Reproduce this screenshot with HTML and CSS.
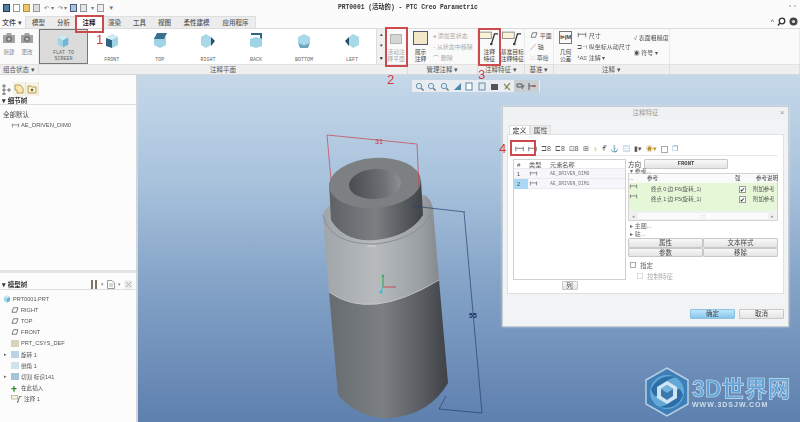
FILE: index.html
```html
<!DOCTYPE html>
<html lang="zh-CN">
<head>
    <meta charset="UTF-8">
    <title>PRT0001 - PTC Creo Parametric</title>
    <link rel="stylesheet" href="styles.css">
</head>
<body>
    <svg class="defs" width="0" height="0">
        <symbol id="dim" viewBox="0 0 12 8"><path d="M1 1V7M11 1V7M1 3H11" fill="none" stroke="#555" stroke-width="1"/></symbol>
        <symbol id="cube" viewBox="0 0 16 16"><path d="M8 1L14 4V12L8 15L2 12V4Z" fill="#9fd3e6"/><path d="M8 1L14 4L8 7L2 4Z" fill="#cfeaf3"/><path d="M8 7L14 4V12L8 15Z" fill="#6fb4d2"/></symbol>
        <symbol id="cube-top" viewBox="0 0 16 16"><path d="M8 6L14 4V12L8 15L2 12V4Z" fill="#9fd3e6"/><path d="M5 0H15L12 6H2Z" fill="#3b6f8e"/></symbol>
        <symbol id="cube-front" viewBox="0 0 16 16"><path d="M8 1L14 4V12L8 15Z" fill="#9fd3e6"/><path d="M2 5L8 7V15L2 13Z" fill="#2f6683"/><path d="M8 1L14 4L8 7L2 4Z" fill="#cfeaf3"/></symbol>
        <symbol id="cube-right" viewBox="0 0 16 16"><path d="M6 1L11 4V12L6 15L1 12V4Z" fill="#a9d8e9"/><path d="M11 4L15 8L11 13Z" fill="#24506b"/></symbol>
        <symbol id="cube-back" viewBox="0 0 16 16"><path d="M8 4L14 6V13L8 15L2 13V6Z" fill="#9fd3e6"/><path d="M3 0H14V6L12 5V2H3Z" fill="#2f6683"/></symbol>
        <symbol id="cube-bottom" viewBox="0 0 16 16"><path d="M8 1L14 4V10L8 12L2 10V4Z" fill="#a9d8e9"/><path d="M2 10L8 12L14 10L12 15H4Z" fill="#6fa6bf"/></symbol>
        <symbol id="cube-left" viewBox="0 0 16 16"><path d="M9 1L15 4V12L9 15L5 12V4Z" fill="#a9d8e9"/><path d="M5 4L1 8L5 13Z" fill="#24506b"/></symbol>
        <symbol id="note" viewBox="0 0 22 16"><rect x="0.5" y="1" width="13" height="7" fill="#fbf3d6" stroke="#888"/><path d="M21 3H17L14 13" fill="none" stroke="#333" stroke-width="1.4"/><circle cx="13.5" cy="14" r="1.4" fill="#333"/></symbol>
        <symbol id="plane" viewBox="0 0 10 8"><path d="M3 1H9L7 7H1Z" fill="none" stroke="#555"/></symbol>
        <symbol id="camera" viewBox="0 0 14 12"><path d="M1 3H4L5 1H9L10 3H13V11H1Z" fill="#a3a3a3"/><circle cx="7" cy="7" r="3" fill="#6f6f6f"/><circle cx="7" cy="7" r="1.5" fill="#c8c8c8"/></symbol>
        <symbol id="lens" viewBox="0 0 10 10"><circle cx="4.5" cy="4.5" r="3" fill="#dcebf5" stroke="#5c8ba8"/><path d="M7 7L9.5 9.5" stroke="#5c6f7c" stroke-width="1.4"/></symbol>
    </svg>

    <div class="page">
        <!-- Title bar -->
        <div class="titlebar">
            <div class="quick">
                <span class="qa qa-app"></span>
                <span class="qa qa-new"></span>
                <span class="qa qa-open"></span>
                <span class="qa qa-save"></span>
                <span class="qa-text">↶ ▾</span>
                <span class="qa-text">↷ ▾</span>
                <span class="qa qa-regen"></span>
                <span class="qa qa-win"></span>
                <span class="qa-text">▾</span>
                <span class="qa qa-close"></span>
                <span class="qa-text">▼</span>
            </div>
            <div class="title">PRT0001 (活动的) - PTC Creo Parametric</div>
            <div class="winbtn">▫ ▫</div>
        </div>

        <!-- Tabs -->
        <div class="tabs">
            <span class="tab-file">文件 ▾</span>
            <div class="tab-strip">
                <span class="tab">模型</span>
                <span class="tab">分析</span>
                <span class="tab active">注释</span>
                <span class="tab">渲染</span>
                <span class="tab">工具</span>
                <span class="tab">视图</span>
                <span class="tab">柔性建模</span>
                <span class="tab">应用程序</span>
            </div>
            <div class="tab-help">
                <span>^</span>
                <svg width="9" height="9" viewBox="0 0 9 9"><circle cx="5" cy="4" r="2.8" fill="none" stroke="#333" stroke-width="1.3"/><path d="M3 6L1 8.5" stroke="#333" stroke-width="1.3"/></svg>
                <svg width="9" height="9" viewBox="0 0 9 9"><circle cx="4.5" cy="4.5" r="4" fill="#444"/><circle cx="4.5" cy="4.5" r="1.6" fill="#ddd"/></svg>
            </div>
        </div>

        <!-- Ribbon -->
        <div class="ribbon">
            <div class="group g-state">
                <div class="group-body">
                    <div class="cam"><svg width="14" height="12"><use href="#camera"/></svg><span>新建</span></div>
                    <div class="cam"><svg width="14" height="12"><use href="#camera"/></svg><span>更改</span></div>
                </div>
                <div class="group-label">组合状态 ▾</div>
            </div>
            <div class="group g-plane">
                <div class="group-body">
                    <div class="view selected"><svg width="14" height="14"><use href="#cube"/></svg><span>FLAT TO<br>SCREEN</span></div>
                    <div class="view"><svg width="16" height="16"><use href="#cube-front"/></svg><span>FRONT</span></div>
                    <div class="view"><svg width="16" height="16"><use href="#cube-top"/></svg><span>TOP</span></div>
                    <div class="view"><svg width="16" height="16"><use href="#cube-right"/></svg><span>RIGHT</span></div>
                    <div class="view"><svg width="16" height="16"><use href="#cube-back"/></svg><span>BACK</span></div>
                    <div class="view"><svg width="16" height="16"><use href="#cube-bottom"/></svg><span>BOTTOM</span></div>
                    <div class="view"><svg width="16" height="16"><use href="#cube-left"/></svg><span>LEFT</span></div>
                    <div class="gallery-scroll"><span>▴</span><span>▾</span><span class="more">▼</span></div>
                    <div class="tool tool-plane"><span class="plane-icon"></span><span>活动注<br>释平面</span></div>
                </div>
                <div class="group-label">注释平面</div>
            </div>
            <div class="group g-manage">
                <div class="group-body">
                    <div class="tool"><span class="show-icon"></span><span>展示<br>注释</span></div>
                    <div class="minor faded">
                        <span>⁕ 添加至状态</span>
                        <span>⁃ 从状态中移除</span>
                        <span>⌒ 删除</span>
                    </div>
                </div>
                <div class="group-label">管理注释 ▾</div>
            </div>
            <div class="group g-feature">
                <div class="group-body">
                    <div class="tool tool-note"><svg width="20" height="15"><use href="#note"/></svg><span>注释<br>特征</span></div>
                    <div class="tool tool-datum"><svg width="20" height="15"><use href="#note"/></svg><span>基准目标<br>注释特征</span></div>
                </div>
                <div class="group-label">注释特征 ▾</div>
            </div>
            <div class="group g-datum">
                <div class="group-body">
                    <div class="minor">
                        <span><svg width="8" height="6"><use href="#plane"/></svg> 平面</span>
                        <span>╱ 轴</span>
                        <span>⁙ 草绘</span>
                    </div>
                </div>
                <div class="group-label">基准 ▾</div>
            </div>
            <div class="group g-note">
                <div class="group-body">
                    <div class="tool tool-gdt"><span class="gdt-icon">⊳|M</span><span>几何<br>公差</span></div>
                    <div class="minor">
                        <span><svg width="10" height="6"><use href="#dim"/></svg> 尺寸</span>
                        <span>⊐⊣ 纵坐标从动尺寸</span>
                        <span>⁴A≡ 注解 ▾</span>
                    </div>
                    <div class="minor minor-short">
                        <span>√ 表面粗糙度</span>
                        <span>◉ 符号 ▾</span>
                    </div>
                </div>
                <div class="group-label">注释 ▾</div>
            </div>
            <div class="group g-rest"><div class="group-body"></div><div class="group-label"></div></div>
        </div>

        <div class="work">
            <!-- Left panel -->
            <div class="side">
                <div class="side-tabs">
                    <span class="side-tab plain">
                        <svg width="9" height="11" viewBox="0 0 9 11"><path d="M1 1H3V3H1ZM1 5H3V7H1ZM1 9H3V11H1ZM6 5H8V7H6Z" fill="none" stroke="#555" stroke-width=".8"/></svg>
                    </span>
                    <span class="side-tab"><svg width="10" height="10" viewBox="0 0 10 10"><path d="M1 1H6L9 4V9H3V6H1Z" fill="#fbe6ae" stroke="#a98a3c" stroke-width=".8"/></svg></span>
                    <span class="side-tab"><svg width="10" height="10" viewBox="0 0 10 10"><path d="M1 2H4L5 3H9V9H1Z" fill="#fbeec5" stroke="#a98a3c" stroke-width=".8"/><circle cx="5" cy="6" r="1.2" fill="#555"/></svg></span>
                </div>
                <div class="panel detail">
                    <div class="panel-head">▾ 细节树</div>
                    <div class="detail-body">
                        <div class="tree-root">全部默认</div>
                        <div class="tree-dim"><svg width="9" height="5"><use href="#dim"/></svg>AE_DRIVEN_DIM0</div>
                    </div>
                </div>
                <div class="panel model">
                    <div class="panel-head model-head">
                        <span>▾ 模型树</span>
                        <span class="head-tools">
                            <svg width="8" height="9" viewBox="0 0 8 9"><path d="M1 0H3V9H1ZM5 0H7V9H5Z" fill="#7d7563"/></svg>
                            <i>▾</i>
                            <svg width="8" height="9" viewBox="0 0 8 9"><path d="M.5.5H5L7.5 3V8.5H.5Z" fill="#fff" stroke="#999"/><path d="M2 4H6M2 6H6" stroke="#aaa"/></svg>
                            <i>▾</i>
                            <svg width="9" height="9" viewBox="0 0 9 9"><rect x=".5" y=".5" width="8" height="8" fill="#e9e9e9"/><path d="M2 2L7 7M7 2L2 7" stroke="#b5b5b5"/></svg>
                        </span>
                    </div>
                    <ul class="tree">
                        <li><svg width="8" height="8"><use href="#cube"/></svg>PRT0001.PRT</li>
                        <li class="lv1"><svg width="8" height="6"><use href="#plane"/></svg>RIGHT</li>
                        <li class="lv1"><svg width="8" height="6"><use href="#plane"/></svg>TOP</li>
                        <li class="lv1"><svg width="8" height="6"><use href="#plane"/></svg>FRONT</li>
                        <li class="lv1"><i class="dot csys"></i>PRT_CSYS_DEF</li>
                        <li class="lv1 arrow"><i class="dot rev"></i>旋转 1</li>
                        <li class="lv1"><i class="dot chamfer"></i>倒角 1</li>
                        <li class="lv1 arrow"><i class="dot cut"></i>切割 标识141</li>
                        <li class="lv1"><i class="insert">✚</i>在此插入</li>
                        <li class="lv1"><svg width="11" height="8"><use href="#note"/></svg>注释 1</li>
                    </ul>
                </div>
            </div>

            <!-- Graphics area -->
            <div class="viewport">
                <div class="view-tools">
                    <span><svg width="9" height="9"><use href="#lens"/></svg></span>
                    <span><svg width="9" height="9"><use href="#lens"/></svg></span>
                    <span><svg width="9" height="9"><use href="#lens"/></svg></span>
                    <span><svg width="9" height="9" viewBox="0 0 9 9"><path d="M1 8L8 1V8Z" fill="#4d87ad"/></svg></span>
                    <span><svg width="9" height="9" viewBox="0 0 9 9"><rect x="1" y="1" width="6" height="7" fill="#fff" stroke="#4d87ad"/></svg></span>
                    <span><svg width="9" height="9" viewBox="0 0 9 9"><rect x="1" y="1" width="6" height="7" fill="#dfe9f0" stroke="#6b8ca3"/></svg></span>
                    <span><svg width="9" height="9" viewBox="0 0 9 9"><rect x="1" y="2" width="7" height="6" fill="#555"/></svg></span>
                    <span><svg width="9" height="9" viewBox="0 0 9 9"><path d="M1 2L7 8M7 1L2 7" stroke="#8a8a55" stroke-width="1.2"/></svg></span>
                    <span class="on"><svg width="9" height="9" viewBox="0 0 9 9"><path d="M1 2H6V5H1ZM6 7L8 3" fill="none" stroke="#555"/></svg></span>
                    <span class="on"><svg width="9" height="9" viewBox="0 0 9 9"><path d="M1 1V8M1 4H8" fill="none" stroke="#555"/><circle cx="6" cy="4" r="1.2" fill="#c55"/></svg></span>
                </div>

                <svg class="model3d" width="662" height="347" viewBox="138 75 662 347">
                    <defs>
                        <linearGradient id="gLow" x1="0" x2="1" y1="0" y2="0">
                            <stop offset="0" stop-color="#676c70"/><stop offset=".45" stop-color="#7b7f83"/><stop offset=".8" stop-color="#575b5f"/><stop offset="1" stop-color="#3d4145"/>
                        </linearGradient>
                        <linearGradient id="gMid" x1="0" x2="1" y1="0" y2="0">
                            <stop offset="0" stop-color="#a0a5a9"/><stop offset=".45" stop-color="#b7bbbe"/><stop offset=".85" stop-color="#9a9fa3"/><stop offset="1" stop-color="#85898d"/>
                        </linearGradient>
                        <linearGradient id="gTop" x1="0" x2="1" y1="0" y2="0">
                            <stop offset="0" stop-color="#5e6266"/><stop offset=".5" stop-color="#7b7f82"/><stop offset=".85" stop-color="#505458"/><stop offset="1" stop-color="#3f4347"/>
                        </linearGradient>
                        <linearGradient id="gHole" x1="0" x2="1" y1="0" y2="0">
                            <stop offset="0" stop-color="#484c50"/><stop offset=".7" stop-color="#6f7377"/><stop offset="1" stop-color="#8c9094"/>
                        </linearGradient>
                    </defs>
                    <path d="M329 292L338 395Q360 420 392 418Q430 414 448 383L439 280Z" fill="url(#gLow)"/>
                    <path d="M323 217L329 292Q370 322 439 280L433 208Q430 198 425 195L330 205Q323 210 323 217Z" fill="url(#gMid)"/>
                    <path d="M329 292Q370 322 439 280" fill="none" stroke="#d0d3d6" stroke-width=".7"/>
                    <path d="M323 215Q330 245 376 244Q424 238 433 208" fill="none" stroke="#8b8f93" stroke-width="1"/>
                    <path d="M329 183L331 220Q345 243 376 240Q410 236 423 215L421 180Z" fill="url(#gTop)"/>
                    <ellipse cx="375" cy="183" rx="46" ry="25" transform="rotate(-4 375 183)" fill="#7c8083"/>
                    <ellipse cx="375" cy="184" rx="26" ry="15" transform="rotate(-4 375 184)" fill="url(#gHole)"/>
                    <path d="M367 246H376" stroke="#dfe1e3" stroke-width=".7"/>

                    <path d="M331 180L327 135L417 144L419 187" fill="none" stroke="#c9404a" stroke-width=".7"/>
                    <text class="dim-text red" x="379" y="144">31</text>
                    <path d="M412 206L465 212M464 212L482 413M439 409L482 413M439 409L446 396" fill="none" stroke="#2a3f72" stroke-width=".7"/>
                    <text class="dim-text navy" x="473" y="318">55</text>

                    <path d="M383 275V287" stroke="#3fae5a" stroke-width="1.2"/>
                    <path d="M383 287H396" stroke="#c8424a" stroke-width=".9"/>
                    <path d="M383 287L381 292" stroke="#35c0cf" stroke-width="1"/>
                    <circle cx="383" cy="276" r="1.3" fill="#3fae5a"/>
                    <circle cx="381" cy="292" r="1.6" fill="#35c0cf"/>
                </svg>

                <!-- Dialog -->
                <div class="dialog">
                    <div class="dlg-title">注释特征<span class="dlg-x">×</span></div>
                    <div class="dlg-tabs"><span class="dlg-tab active">定义</span><span class="dlg-tab">属性</span></div>
                    <div class="dlg-panel">
                        <div class="dlg-toolbar">
                            <svg width="9" height="6"><use href="#dim"/></svg>
                            <svg width="9" height="6"><use href="#dim"/></svg>
                            <span class="tb-glyph">⊐8</span>
                            <span class="tb-glyph">⊏8</span>
                            <span class="tb-glyph">⊡8</span>
                            <span class="tb-glyph">⊞</span>
                            <span class="tb-glyph gold">♁</span>
                            <span class="tb-glyph">∜</span>
                            <span class="tb-glyph green">⚓</span>
                            <span class="tb-glyph blue">▤</span>
                            <span class="tb-glyph">▮▾</span>
                            <span class="tb-glyph gold">◉▾</span>
                            <span class="tb-box"></span>
                            <span class="tb-glyph blue">❐</span>
                        </div>
                        <div class="dlg-main">
                            <div class="dlg-left">
                                <div class="list">
                                    <div class="list-row list-head"><span>#</span><span>类型</span><span>元素名称</span></div>
                                    <div class="list-row"><span>1</span><span><svg width="9" height="5"><use href="#dim"/></svg></span><span class="mono">AE_DRIVEN_DIM0</span></div>
                                    <div class="list-row"><span class="sel">2</span><span><svg width="9" height="5"><use href="#dim"/></svg></span><span class="mono">AE_DRIVEN_DIM1</span></div>
                                </div>
                                <button class="btn btn-col">列</button>
                            </div>
                            <div class="dlg-right">
                                <div class="dir-row"><span>方向</span><button class="btn dir-btn">FRONT</button></div>
                                <div class="sec sec-ref">▾ 参考...</div>
                                <div class="ref">
                                    <div class="ref-head"><span>...</span><span>参考</span><span>强</span><span>参考说明</span></div>
                                    <div class="ref-body">
                                        <div class="ref-row"><svg width="9" height="5"><use href="#dim"/></svg><span>终点 0:边:F6(旋转_1)</span><i class="chk">✔</i><span>附加参考</span></div>
                                        <div class="ref-row"><svg width="9" height="5"><use href="#dim"/></svg><span>终点 1:边:F5(旋转_1)</span><i class="chk">✔</i><span>附加参考</span></div>
                                    </div>
                                    <div class="ref-scroll"><span>◂</span><b>:::</b><span>▸</span></div>
                                </div>
                                <div class="sec">▸ 主图...</div>
                                <div class="sec">▸ 驻...</div>
                                <div class="btn-grid">
                                    <button class="btn">属性</button><button class="btn">文本样式</button>
                                    <button class="btn">参数</button><button class="btn">移除</button>
                                </div>
                                <label class="check"><i class="box"></i>指定</label>
                                <label class="check sub"><i class="box"></i>控制特征</label>
                            </div>
                        </div>
                    </div>
                    <div class="dlg-foot">
                        <button class="btn ok">确定</button>
                        <button class="btn cancel">取消</button>
                    </div>
                </div>

                <!-- Watermark -->
                <div class="logo">
                    <svg width="44" height="50" viewBox="0 0 44 50">
                        <path d="M22 1L43 13V37L22 49L1 37V13Z" fill="#3f7fb8" stroke="#b9cfe2" stroke-width="1.5"/>
                        <circle cx="22" cy="25" r="17" fill="#62a9d8"/>
                        <path d="M6 22Q14 6 32 10Q18 12 14 26Q10 34 6 22ZM38 28Q32 44 14 40Q28 38 32 24Q34 18 38 28Z" fill="#2e6ea8"/>
                        <path d="M22 14L32 20V31L22 37L12 31V20Z" fill="#cfe5f3"/>
                        <path d="M22 18L28 22V29L22 33L16 29V22Z" fill="#3a77ad"/>
                        <path d="M22 18L28 22L22 26L16 22Z" fill="#6fb2dd"/>
                    </svg>
                    <div class="logo-text">
                        <div class="logo-name">3D世界网</div>
                        <div class="logo-url">WWW.3DSJW.COM</div>
                    </div>
                </div>
            </div>
        </div>

        <!-- Red marks drawn over the screenshot -->
        <span class="mark mark-box box1"></span><span class="mark-num n1">1</span>
        <span class="mark mark-box box2"></span><span class="mark-num n2">2</span>
        <span class="mark mark-box box3"></span><span class="mark-num n3">3</span>
        <span class="mark mark-box box4"></span><span class="mark-num n4">4</span>
    </div>
</body>
</html>
```

FILE: styles.css
```css
/* General Reset */
* {
    margin: 0;
    padding: 0;
    box-sizing: border-box;
}

body {
    width: 800px;
    height: 422px;
    overflow: hidden;
    background: #fff;
    font-family: "Liberation Sans", "Noto Sans CJK SC", sans-serif;
    font-size: 7px;
    color: #444;
}

.defs {
    position: absolute;
}

/* The source is a scaled-down photo, so everything is a little soft */
.page {
    position: relative;
    width: 800px;
    height: 422px;
    display: flex;
    flex-direction: column;
    filter: blur(0.35px);
}

/* Title bar */
.titlebar {
    height: 15px;
    display: flex;
    align-items: center;
    padding: 0 3px;
    background: #fbfbfb;
    position: relative;
}

.quick {
    display: flex;
    align-items: center;
    gap: 3px;
}

.qa {
    width: 7px;
    height: 8px;
    border: 1px solid #999;
    background: #fff;
}

.qa-app {
    background: #4d7fa8;
    border-color: #333;
}

.qa-open {
    background: #f0c66a;
    border-color: #b9903b;
}

.qa-save {
    background: #ddd;
}

.qa-regen {
    background: #9fc8e4;
    border-color: #557;
}

.qa-win {
    background: #dde8ef;
}

.qa-close {
    background: #eee;
}

.qa-text {
    font-size: 6px;
    color: #777;
    margin-left: 1px;
}

.title {
    position: absolute;
    left: 338px;
    top: 2px;
    font-family: "Liberation Mono", "Noto Sans CJK SC", monospace;
    font-size: 6.3px;
    font-weight: bold;
    color: #333;
    white-space: nowrap;
}

.winbtn {
    position: absolute;
    right: 4px;
    top: 2px;
    color: #777;
}

/* Tabs */
.tabs {
    height: 14px;
    display: flex;
    align-items: flex-end;
    background: #fbfbfb;
    border-bottom: 1px solid #dcdcdc;
    position: relative;
}

.tab-file {
    width: 24px;
    height: 11px;
    padding-left: 2px;
    line-height: 11px;
    font-weight: 500;
}

.tab-strip {
    display: flex;
    height: 12px;
    margin-left: 1px;
    background: #ececec;
    border: 1px solid #dedede;
    border-bottom: 0;
}

.tab {
    width: 25px;
    text-align: center;
    line-height: 11px;
    font-size: 6.5px;
    font-weight: 500;
    color: #555;
    white-space: nowrap;
}

.tab:nth-child(n+7) {
    width: 39px;
}

.tab.active {
    width: 26px;
    background: #fff;
    color: #222;
    font-weight: 700;
}

.tab-help {
    position: absolute;
    right: 2px;
    top: 0;
    display: flex;
    align-items: center;
    gap: 3px;
    height: 12px;
}

/* Ribbon */
.ribbon {
    height: 46px;
    display: flex;
    background: #fafafa;
    border-bottom: 1px solid #d8d8d8;
}

.group {
    display: flex;
    flex-direction: column;
    flex: none;
}

.group-body {
    flex: 1;
    display: flex;
    min-height: 0;
    border-right: 1px solid #ececec;
}

.group-label {
    height: 10px;
    line-height: 10px;
    text-align: center;
    background: #efefef;
    border-top: 1px solid #e2e2e2;
    border-right: 1px solid #dcdcdc;
    color: #555;
    font-size: 6.5px;
}

.g-state { width: 39px; }
.g-plane { width: 369px; }
.g-manage { width: 70px; }
.g-feature { width: 47px; }
.g-datum { width: 29px; }
.g-note { width: 116px; }
.g-rest { flex: 1; }

.g-state .group-body {
    padding: 3px 1px 0 2px;
    gap: 4px;
}

.cam {
    width: 14px;
    display: flex;
    flex-direction: column;
    align-items: center;
    gap: 4px;
    color: #888;
    font-size: 5.6px;
    white-space: nowrap;
}

.view {
    width: 48.3px;
    display: flex;
    flex-direction: column;
    align-items: center;
    justify-content: space-between;
    padding: 4px 0 1px;
    background: #fff;
    font-family: "Liberation Mono", monospace;
    font-size: 5px;
    color: #666;
    text-align: center;
    line-height: 6px;
}

.view.selected {
    width: 49px;
    background: #dbdbdb;
    border: 1px solid #777;
}

.gallery-scroll {
    width: 9px;
    display: flex;
    flex-direction: column;
    align-items: center;
    background: #f0f0f0;
    border-left: 1px solid #ddd;
    font-size: 5px;
    line-height: 11px;
}

.gallery-scroll .more {
    margin-top: auto;
    color: #222;
}

.tool {
    display: flex;
    flex-direction: column;
    align-items: center;
    justify-content: space-between;
    padding: 2px 0 1px;
    font-size: 5.8px;
    line-height: 7px;
    text-align: center;
    color: #444;
}

.tool-plane {
    width: 22px;
    color: #aaa;
}

.plane-icon {
    width: 12px;
    height: 10px;
    margin-top: 3px;
    background: #d5d5d5;
    border: 1px solid #b5b5b5;
}

.g-manage .group-body {
    padding-left: 5px;
    gap: 5px;
}

.show-icon {
    width: 15px;
    height: 14px;
    background: #f1e8c8;
    border: 1px solid #557;
}

.minor {
    display: flex;
    flex-direction: column;
    justify-content: space-around;
    white-space: nowrap;
    font-size: 6px;
    padding: 1px 0;
    color: #555;
}

.minor.faded {
    color: #aaa;
}

.minor-short {
    justify-content: flex-start;
    gap: 6px;
    padding-top: 4px;
}

.tool-note { width: 23px; }
.tool-datum { width: 24px; }

.g-datum .group-body {
    padding-left: 5px;
}

.g-note .group-body {
    padding-left: 3px;
    gap: 3px;
}

.tool-gdt { width: 17px; }

.gdt-icon {
    font-size: 6px;
    font-weight: bold;
    border: 1px solid #777;
    padding: 2px 0;
    white-space: nowrap;
}

/* Work area */
.work {
    flex: 1;
    min-height: 0;
    display: flex;
}

.side {
    width: 138px;
    flex: none;
    display: flex;
    flex-direction: column;
    background: #fcfcfc;
    border-right: 2px solid #d2d6da;
}

.side-tabs {
    height: 21px;
    display: flex;
    align-items: flex-end;
    background: #fcfcfc;
}

.side-tab {
    width: 13px;
    height: 14px;
    display: flex;
    align-items: center;
    justify-content: center;
    background: #f5f2e8;
    border-right: 1px solid #e8e4d8;
}

.side-tab.plain {
    background: transparent;
    border: 0;
}

.panel-head {
    height: 9px;
    line-height: 9px;
    padding-left: 2px;
    font-size: 6.5px;
    font-weight: 700;
    color: #333;
    border-bottom: 1px solid #dedede;
}

.detail {
    height: 174px;
    flex: none;
}

.detail-body {
    padding: 4px 3px;
}

.tree-root {
    line-height: 11px;
    font-size: 6.5px;
}

.tree-dim {
    display: flex;
    align-items: center;
    gap: 1px;
    padding-left: 8px;
    font-size: 5.8px;
    line-height: 10px;
    color: #555;
}

.model {
    flex: 1;
    border-top: 3px solid #e3e3e3;
    padding-top: 7px;
}

.model-head {
    display: flex;
    justify-content: space-between;
    height: 10px;
    padding-right: 3px;
}

.head-tools {
    display: flex;
    align-items: center;
    gap: 3px;
    font-weight: 400;
    color: #888;
    font-size: 5px;
}

.head-tools i {
    font-style: normal;
}

.tree {
    list-style: none;
    padding: 3px 0 0 3px;
}

.tree li {
    height: 11.2px;
    display: flex;
    align-items: center;
    gap: 2px;
    font-size: 5.6px;
    color: #555;
}

.tree .lv1 {
    padding-left: 8px;
}

.tree .arrow {
    position: relative;
}

.tree .arrow::before {
    content: "▸";
    position: absolute;
    left: 1px;
    top: 2px;
    font-size: 5px;
    color: #666;
}

.dot {
    width: 8px;
    height: 7px;
    display: inline-block;
    flex: none;
}

.csys { background: #d9d2bb; }
.rev { background: #b8d4e6; }
.chamfer { background: #cfe2ee; }
.cut { background: #a6c4d8; }

.insert {
    width: 8px;
    font-style: normal;
    color: #2c8a2c;
    font-size: 6px;
}

/* Graphics area */
.viewport {
    flex: 1;
    position: relative;
    background: linear-gradient(to bottom, #c5d8e9 0%, #a9c3dd 30%, #84a3c7 60%, #5e80ae 100%);
}

.view-tools {
    position: absolute;
    left: 274px;
    top: 5px;
    display: flex;
    padding: 0 1px;
    background: #e9edf1;
}

.view-tools span {
    width: 12.6px;
    height: 12px;
    display: flex;
    align-items: center;
    justify-content: center;
}

.view-tools .on {
    background: #c9ced3;
}

.model3d {
    position: absolute;
    left: 0;
    top: 0;
}

.dim-text {
    font-family: "Liberation Sans", sans-serif;
    font-size: 7px;
    text-anchor: middle;
}

.dim-text.red { fill: #c9303c; }
.dim-text.navy { fill: #182a5c; font-weight: bold; }

/* Dialog */
.dialog {
    position: absolute;
    left: 364px;
    top: 31px;
    width: 287px;
    height: 221px;
    display: flex;
    flex-direction: column;
    background: #f2f3f4;
    border: 1px solid #c6ccd2;
    box-shadow: 0 0 2px rgba(255, 255, 255, 0.6);
}

.dlg-title {
    position: relative;
    height: 12px;
    line-height: 12px;
    text-align: center;
    background: #eff1f3;
    color: #999;
    font-size: 6.5px;
}

.dlg-x {
    position: absolute;
    right: 4px;
    top: 0;
    color: #888;
}

.dlg-tabs {
    display: flex;
    height: 9px;
    margin: 6px 0 0 6px;
}

.dlg-tab {
    padding: 0 2.5px;
    line-height: 9px;
    background: #ececec;
    border: 1px solid #dfdfdf;
    border-bottom: 0;
    color: #555;
}

.dlg-tab.active {
    background: #fff;
    font-weight: 500;
}

.dlg-panel {
    height: 160px;
    margin: 0 4px;
    padding: 8px 5px 0;
    background: #fff;
    border: 1px solid #dfe2e5;
}

.dlg-toolbar {
    height: 13px;
    display: flex;
    align-items: center;
    gap: 4px;
    padding-left: 2px;
    margin-bottom: 3px;
    border-bottom: 1px solid #e8e8e8;
}

.tb-glyph {
    font-size: 7px;
    line-height: 8px;
    color: #555;
}

.tb-glyph.gold { color: #b8952f; }
.tb-glyph.green { color: #7aa84e; }
.tb-glyph.blue { color: #5a97c4; }

.tb-box {
    width: 7px;
    height: 7px;
    border: 1px solid #aaa;
}

.dlg-main {
    display: flex;
    gap: 2px;
}

.dlg-left {
    width: 113px;
    display: flex;
    flex-direction: column;
    align-items: center;
}

.list {
    width: 100%;
    height: 121px;
    border: 1px solid #d0d0d0;
}

.list-row {
    display: grid;
    grid-template-columns: 15px 21px 1fr;
    height: 10px;
    line-height: 10px;
    font-size: 5.5px;
    background: #f7f6fb;
    border-bottom: 1px solid #eaeaf0;
}

.list-row span:first-child {
    padding-left: 3px;
    margin-right: 1px;
}

.list-head {
    height: 9px;
    line-height: 9px;
    background: #fff;
    font-size: 6.2px;
    color: #555;
}

.list-row .sel {
    background: #a9d8f5;
}

.mono {
    font-family: "Liberation Mono", monospace;
    font-size: 4.7px;
    color: #777;
}

.btn {
    font-family: inherit;
    font-size: 6.5px;
    color: #444;
    background: linear-gradient(to bottom, #f8f8f8, #e4e4e4);
    border: 1px solid #c8c8c8;
    border-radius: 1px;
}

.btn-col {
    width: 16px;
    height: 9px;
    line-height: 7px;
    margin-top: 1px;
}

.dlg-right {
    width: 150px;
}

.dir-row {
    display: flex;
    align-items: center;
    gap: 3px;
    height: 10px;
}

.dir-row span {
    font-size: 6.5px;
}

.dir-btn {
    width: 84px;
    height: 10px;
    line-height: 8px;
    font-family: "Liberation Mono", monospace;
    font-size: 5.5px;
    font-weight: bold;
}

.sec {
    height: 8px;
    line-height: 8px;
    padding-left: 2px;
    font-size: 6px;
    color: #666;
}

/* This heading sits tight between the button and the table */
.sec-ref {
    height: 4px;
    line-height: 4px;
}

.ref {
    height: 48px;
    margin-bottom: 1px;
    border: 1px solid #d4d4d4;
    display: flex;
    flex-direction: column;
}

.ref-head {
    display: grid;
    grid-template-columns: 18px 88px 21px 1fr;
    height: 9px;
    line-height: 9px;
    background: #fafafa;
    font-size: 5.5px;
    white-space: nowrap;
}

.ref-body {
    flex: 1;
    padding-top: 1px;
    background: #e6f7d8;
}

.ref-row {
    display: grid;
    grid-template-columns: 22px 88px 14px 1fr;
    height: 10px;
    line-height: 10px;
    font-size: 5.4px;
    white-space: nowrap;
    color: #555;
}

.chk {
    width: 7px;
    height: 7px;
    margin-top: 1.5px;
    font-style: normal;
    font-size: 6px;
    line-height: 6px;
    color: #222;
    background: #fff;
    border: 1px solid #999;
}

.ref-scroll {
    height: 9px;
    display: flex;
    justify-content: space-between;
    align-items: center;
    padding: 0 3px;
    background: #f0f0f0;
    font-size: 5px;
    color: #999;
}

.ref-scroll b {
    flex: 1;
    margin: 0 3px;
    text-align: center;
    background: #fbfbfb;
    font-weight: 400;
}

.btn-grid {
    display: grid;
    grid-template-columns: 1fr 1fr;
    grid-auto-rows: 9.5px;
    margin-bottom: 4px;
}

.btn-grid .btn {
    line-height: 7px;
}

.check {
    display: flex;
    align-items: center;
    gap: 4px;
    height: 7px;
    margin: 0 0 4px 2px;
    font-size: 6.5px;
    color: #666;
}

.check.sub {
    margin: 4px 0 0 9px;
    color: #aaa;
}

.box {
    width: 6px;
    height: 6px;
    background: #fff;
    border: 1px solid #aaa;
}

.check.sub .box {
    border-color: #ddd;
}

.dlg-foot {
    flex: 1;
    display: flex;
    justify-content: flex-end;
    align-items: center;
    gap: 4px;
    padding: 7px 4px 0 0;
}

.dlg-foot .btn {
    width: 45px;
    height: 10px;
    line-height: 8px;
}

.btn.ok {
    background: linear-gradient(to bottom, #bfe6fa, #86c7ec);
    border-color: #8fc2e2;
}

/* Watermark */
.logo {
    position: absolute;
    left: 507px;
    top: 292px;
    display: flex;
    gap: 3px;
}

.logo-text {
    padding-top: 10px;
}

.logo-name {
    font-size: 23px;
    line-height: 24px;
    font-weight: 700;
    color: #5fa3d8;
    white-space: nowrap;
    -webkit-text-stroke: 0.6px #cfe0ee;
}

.logo-url {
    font-size: 7px;
    line-height: 7px;
    font-weight: 700;
    letter-spacing: 1px;
    color: #cfdeea;
    white-space: nowrap;
}

/* Red marks */
.mark-box {
    position: absolute;
    border: 2px solid #cc4a4c;
}

.box1 { left: 75px; top: 15px; width: 29px; height: 18px; }
.box2 { left: 385px; top: 27px; width: 23px; height: 40px; }
.box3 { left: 478px; top: 28px; width: 23px; height: 38px; }
.box4 { left: 510px; top: 140px; width: 26px; height: 16px; }

.mark-num {
    position: absolute;
    font-size: 13px;
    line-height: 13px;
    color: #d0393c;
}

.n1 { left: 96px; top: 33px; }
.n2 { left: 387px; top: 73px; }
.n3 { left: 478px; top: 68px; }
.n4 { left: 499px; top: 142px; }
```
